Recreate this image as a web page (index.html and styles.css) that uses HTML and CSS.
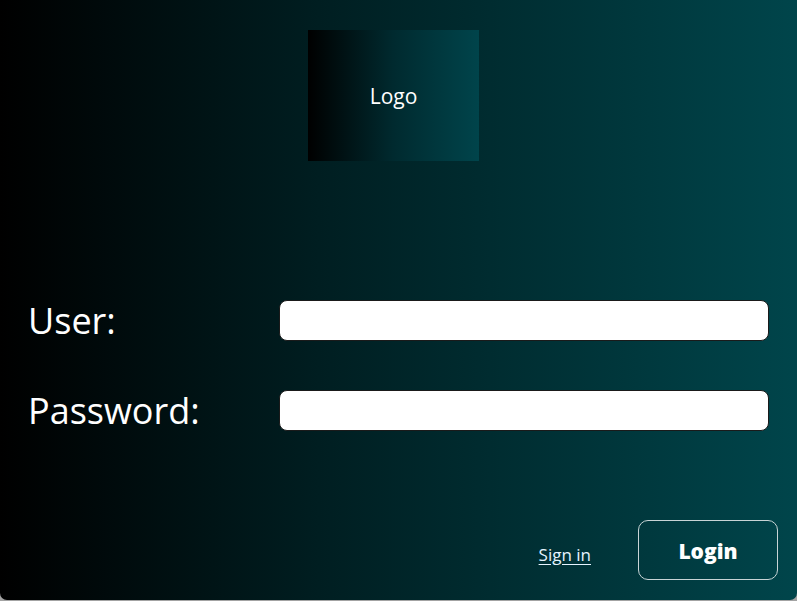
FILE: index.html
```html
<!DOCTYPE html>
<html lang="en">
<head>
<meta charset="utf-8">
<title>Login</title>
<link rel="stylesheet" href="styles.css">
</head>
<body>
<div class="screen">
  <div class="logo-row">
    <div class="logo">Logo</div>
  </div>
  <form class="form">
    <label class="label" for="user">User:</label>
    <input class="field" id="user" type="text">
    <label class="label" for="pass">Password:</label>
    <input class="field" id="pass" type="password">
  </form>
  <div class="actions">
    <a class="signin" href="#">Sign in</a>
    <button class="login" type="button">Login</button>
  </div>
</div>
</body>
</html>
```
FILE: styles.css
```css
html, body {
  margin: 0;
  padding: 0;
  background: #a3a3a3;
}
body {
  width: 797px;
  height: 601px;
  overflow: hidden;
}
.screen {
  box-sizing: border-box;
  width: 797px;
  height: 600px;
  border-radius: 0 0 7px 7px;
  background: linear-gradient(to right, #000000 0%, #001e21 40%, #00454b 100%);
  font-family: "Open Sans", "Noto Sans", sans-serif;
  color: #ffffff;
  display: flex;
  flex-direction: column;
  padding-top: 30px;
}
.logo-row {
  display: flex;
  padding-left: 308px;
}
.logo {
  width: 171px;
  height: 131px;
  background: linear-gradient(to right, #000000 0%, #002a2f 50%, #00444b 100%);
  display: flex;
  align-items: center;
  justify-content: center;
  font-size: 21px;
  color: #ffffff;
  box-sizing: border-box;
}
.form {
  margin: 139px 0 0 0;
  padding: 0 28px 0 28px;
  display: grid;
  grid-template-columns: 251px 1fr;
  row-gap: 49px;
  align-items: center;
}
.label {
  font-size: 36px;
  line-height: 40px;
  color: #ffffff;
}
.field {
  box-sizing: border-box;
  height: 41px;
  width: 100%;
  margin: 0;
  border: 1px solid #1a1a1a;
  border-radius: 8px;
  background: #ffffff;
  outline: none;
}
.actions {
  margin-top: 89px;
  display: flex;
  justify-content: flex-end;
  align-items: center;
  gap: 47px;
  padding-right: 19px;
}
.signin {
  font-size: 17px;
  color: #e6f4ff;
  text-decoration: underline;
  text-underline-offset: 3px;
  margin-top: 8px;
}
.login {
  box-sizing: border-box;
  width: 140px;
  height: 60px;
  border: 1px solid #c8d4d6;
  border-radius: 10px;
  background: transparent;
  color: #ffffff;
  font-family: "Open Sans", "Noto Sans", sans-serif;
  font-weight: 800;
  font-size: 21px;
  padding-top: 3px;
  cursor: pointer;
}
```
